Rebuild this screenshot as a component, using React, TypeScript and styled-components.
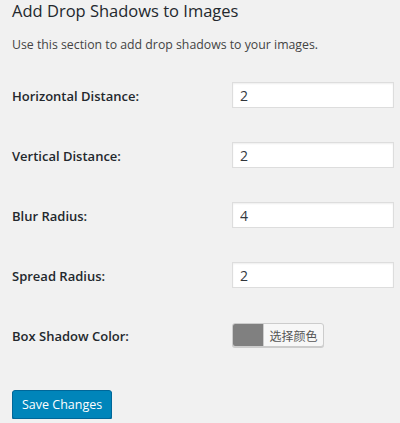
import styled, { createGlobalStyle } from "styled-components";

const GlobalStyle = createGlobalStyle`
  html, body {
    margin: 0;
    padding: 0;
    background: #f1f1f1;
  }
  body {
    font-family: "Open Sans", "Noto Sans CJK SC", sans-serif;
    color: #23282d;
  }
`;

const Wrap = styled.div`
  padding: 0 6px 0 12px;
`;

const Title = styled.h2`
  margin: 0;
  padding-top: 1px;
  font-size: 16.5px;
  font-weight: 400;
  line-height: 20px;
  color: #23282d;
`;

const Intro = styled.p`
  margin: 15px 0 0;
  font-size: 12.3px;
  line-height: 18px;
  color: #444;
`;

const Form = styled.div`
  display: grid;
  grid-template-columns: 220px 162px;
  grid-auto-rows: 60px;
  align-items: center;
  margin-top: 11px;
`;

const Label = styled.label`
  font-size: 13px;
  font-weight: 600;
  color: #23282d;
  padding-top: 1px;
`;

const TextInput = styled.input`
  box-sizing: border-box;
  width: 162px;
  height: 26px;
  padding: 0 7px;
  border: 1px solid #ddd;
  background: #fff;
  font-family: inherit;
  font-size: 14px;
  color: #32373c;
  box-shadow: inset 0 1px 2px rgba(0, 0, 0, 0.07);
  outline: none;
`;

const ColorButton = styled.button`
  display: flex;
  align-items: stretch;
  width: 92px;
  height: 24px;
  padding: 0;
  border: 1px solid #ccc;
  border-radius: 3px;
  background: #f7f7f7;
  box-shadow: 0 1px 0 #ccc;
  overflow: hidden;
  cursor: pointer;
`;

const Swatch = styled.span<{ color: string }>`
  width: 30px;
  background: ${(p) => p.color};
`;

const ColorText = styled.span`
  flex: 1;
  display: flex;
  align-items: center;
  justify-content: center;
  border-left: 1px solid #ccc;
  font-family: "Noto Sans CJK SC", sans-serif;
  font-size: 12px;
  color: #555;
`;

const SaveButton = styled.button`
  margin-top: 25px;
  height: 29px;
  padding: 0 9px;
  border: 1px solid #006799;
  border-radius: 3px;
  background: #0085ba;
  box-shadow: 0 1px 0 #006799;
  color: #fff;
  font-family: inherit;
  font-size: 12.5px;
  cursor: pointer;
`;

const fields = [
  { label: "Horizontal Distance:", value: "2" },
  { label: "Vertical Distance:", value: "2" },
  { label: "Blur Radius:", value: "4" },
  { label: "Spread Radius:", value: "2" },
];

export default function App() {
  return (
    <Wrap>
      <GlobalStyle />
      <Title>Add Drop Shadows to Images</Title>
      <Intro>Use this section to add drop shadows to your images.</Intro>
      <Form>
        {fields.map((f) => [
          <Label key={f.label + "l"}>{f.label}</Label>,
          <TextInput key={f.label + "i"} type="text" defaultValue={f.value} />,
        ])}
        <Label>Box Shadow Color:</Label>
        <div>
          <ColorButton type="button">
            <Swatch color="#808080" />
            <ColorText>选择颜色</ColorText>
          </ColorButton>
        </div>
      </Form>
      <SaveButton type="button">Save Changes</SaveButton>
    </Wrap>
  );
}
